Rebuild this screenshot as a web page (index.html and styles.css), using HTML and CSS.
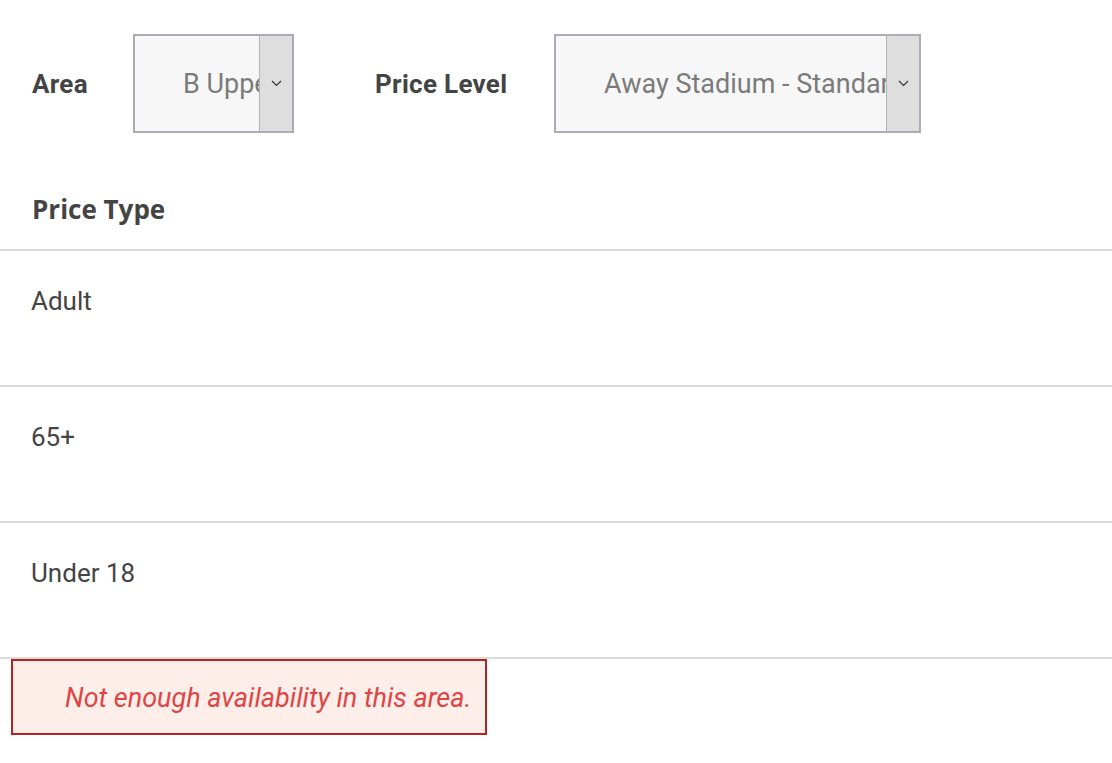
FILE: index.html
```html
<!DOCTYPE html>
<html lang="en">
<head>
    <meta charset="utf-8">
    <title>Tickets</title>
    <link rel="stylesheet" href="styles.css">
</head>

<body>
<div class="filters">
    <div class="field">
        <label class="field-label">Area</label>
        <div class="select select-area">
            <span class="select-value">B Upper</span>
            <span class="select-arrow">
                <svg width="11" height="7" viewBox="0 0 11 7"><path d="M1 1l4.5 4.5L10 1" fill="none" stroke="#333" stroke-width="1.2"/></svg>
            </span>
        </div>
    </div>
    <div class="field">
        <label class="field-label">Price Level</label>
        <div class="select select-level">
            <span class="select-value">Away Stadium - Standard</span>
            <span class="select-arrow">
                <svg width="11" height="7" viewBox="0 0 11 7"><path d="M1 1l4.5 4.5L10 1" fill="none" stroke="#333" stroke-width="1.2"/></svg>
            </span>
        </div>
    </div>
</div>

<div class="price-types">
    <div class="price-head">Price Type</div>
    <div class="price-row">Adult</div>
    <div class="price-row">65+</div>
    <div class="price-row">Under 18</div>
</div>

<div class="error-box">Not enough availability in this area.</div>
</body>
</html>
```

FILE: styles.css
```css
body {
    margin: 0;
    padding: 0;
    background-color: #fff;
    color: #444;
    font-family: Roboto, "Liberation Sans", sans-serif;
}

.filters {
    display: flex;
    align-items: center;
    padding: 34px 0 0 32px;
}

.field {
    display: flex;
    align-items: center;
}

.field + .field {
    margin-left: 81px;
}

.field-label {
    font-size: 26px;
    font-weight: bold;
    letter-spacing: 0.3px;
    color: #444;
    width: 101px;
}

.field + .field .field-label {
    width: 179px;
}

.select {
    display: flex;
    height: 95px;
    border: 2px solid #acacb4;
    background-color: #f7f7f7;
}

.select-area {
    width: 157px;
}

.select-level {
    width: 363px;
}

.select-value {
    flex: 1;
    overflow: hidden;
    white-space: nowrap;
    font-size: 27px;
    line-height: 97px;
    color: #7b7b7b;
    padding-left: 48px;
}

.select-arrow {
    width: 32px;
    display: flex;
    align-items: center;
    justify-content: center;
    background-color: #dedede;
    border-left: 1px solid #b4b4bb;
}

.price-head {
    font-family: "Open Sans", sans-serif;
    font-weight: bold;
    font-size: 26px;
    color: #444;
    padding-left: 32px;
    padding-top: 54px;
    height: 118px;
    line-height: 44px;
    box-sizing: border-box;
    border-bottom: 2px solid #dcdcdc;
}

.price-row {
    font-size: 26px;
    color: #444;
    padding-left: 31px;
    padding-top: 35px;
    height: 136px;
    box-sizing: border-box;
    border-bottom: 2px solid #dcdcdc;
}

.error-box {
    margin: 0 0 0 11px;
    width: 420px;
    height: 72px;
    border: 2px solid #b52222;
    background-color: #fdeeea;
    color: #e04545;
    font-style: italic;
    font-size: 27px;
    line-height: 74px;
    padding-left: 52px;
}
```
